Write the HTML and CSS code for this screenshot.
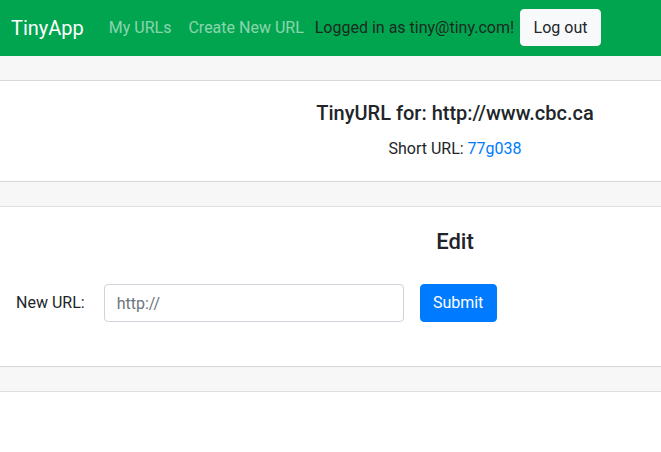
FILE: index.html
```html
<!DOCTYPE html>
<html lang="en">
<head>
<meta charset="utf-8">
<title>TinyApp</title>
<link rel="stylesheet" href="styles.css">
</head>
<body>
<div class="page">
  <nav class="navbar">
    <a class="brand" href="#">TinyApp</a>
    <a class="nav-link" href="#">My URLs</a>
    <a class="nav-link nav-link-last" href="#">Create New URL</a>
    <span class="login-text">Logged in as tiny@tiny.com!</span>
    <button class="btn btn-light" type="button">Log out</button>
  </nav>
  <div class="card">
    <div class="card-header"></div>
    <div class="card-body">
      <h5 class="card-title">TinyURL for: http://www.cbc.ca</h5>
      <p class="card-text">Short URL: <a class="link" href="#">77g038</a></p>
    </div>
    <div class="card-footer"></div>
  </div>
  <div class="card card-next">
    <div class="card-body">
      <h4 class="edit-title">Edit</h4>
      <form class="form-inline">
        <label class="form-label" for="longURL">New URL:</label>
        <input class="form-control" id="longURL" type="text" placeholder="http://">
        <button class="btn btn-primary" type="button">Submit</button>
      </form>
    </div>
    <div class="card-footer"></div>
  </div>
</div>
</body>
</html>
```

FILE: styles.css
```css
* { box-sizing: border-box; }
html, body { margin: 0; padding: 0; }
body {
  font-family: Roboto, "Noto Sans", "Liberation Sans", sans-serif;
  font-size: 16px;
  line-height: 1.5;
  color: #212529;
  background: #fff;
  overflow: hidden;
}
.page { width: 910px; }
.navbar {
  display: flex;
  align-items: center;
  height: 56px;
  padding: 0 11px;
  background: #02a54f;
  white-space: nowrap;
}
.brand {
  font-size: 20px;
  color: #fff;
  text-decoration: none;
  margin-right: 25px;
}
.nav-link {
  color: rgba(255,255,255,0.55);
  text-decoration: none;
  margin-right: 17px;
}
.nav-link-last { margin-right: 11px; }
.login-text {
  color: #1b2a20;
  margin-right: 6px;
}
.btn {
  font-family: inherit;
  font-size: 16px;
  line-height: 1.5;
  padding: 6px 12px;
  border: 1px solid transparent;
  border-radius: 4px;
  cursor: pointer;
}
.btn-light {
  background: #f8f9fa;
  color: #212529;
  border-color: #f8f9fa;
  width: 81px;
  height: 37px;
  margin-top: -2px;
}
.card {
  border-bottom: 1px solid rgba(0,0,0,0.125);
  text-align: center;
}
.card-header {
  height: 25px;
  background: rgba(0,0,0,0.03);
  border-bottom: 1px solid rgba(0,0,0,0.125);
}
.card-footer {
  height: 25px;
  background: rgba(0,0,0,0.03);
  border-top: 1px solid rgba(0,0,0,0.125);
}
.card-body { padding: 20px; }
.card-title {
  margin: 0 0 12px;
  font-size: 20px;
  font-weight: 500;
  line-height: 24px;
}
.card-text { margin: 0; }
.link { color: #007bff; text-decoration: none; }
.edit-title {
  margin: 0 0 27px;
  font-size: 22px;
  font-weight: 500;
  line-height: 30px;
}
.form-inline {
  display: flex;
  align-items: center;
  margin-bottom: 24px;
  margin-left: -4px;
}
.form-label { margin-right: 19px; }
.form-control {
  width: 300px;
  height: 38px;
  padding: 6px 12px;
  font-family: inherit;
  font-size: 16px;
  color: #495057;
  border: 1px solid #ced4da;
  border-radius: 4px;
  margin-right: 16px;
}
.form-control::placeholder { color: #6c757d; }
.btn-primary {
  background: #007bff;
  border-color: #007bff;
  color: #fff;
  width: 77px;
  height: 38px;
}
```
